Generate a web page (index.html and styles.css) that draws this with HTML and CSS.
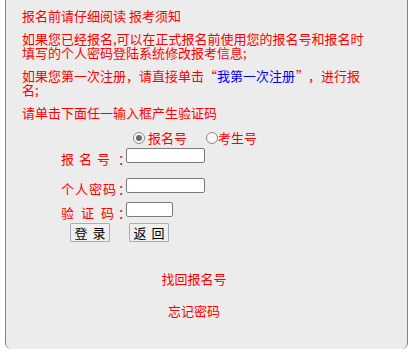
FILE: index.html
```html
<!DOCTYPE html>
<html lang="zh-CN">
<head>
<meta charset="utf-8">
<title>报名登录</title>
<link rel="stylesheet" href="styles.css">
</head>
<body>
<div class="panel">
  <div class="notice">
    <p>报名前请仔细阅读 <a class="red-link" href="#">报考须知</a></p>
    <p>如果您已经报名,可以在正式报名前使用您的报名号和报名时填写的个人密码登陆系统修改报考信息;</p>
    <p>如果您第一次注册，请直接单击<span class="q open">“</span><a class="blue-link" href="#">我第一次注册</a><span class="q close">”</span>，进行报<br>名;</p>
    <p>请单击下面任一输入框产生验证码</p>
  </div>
  <form class="login" onsubmit="return false">
    <div class="choice">
      <label class="opt"><input type="radio" name="kind" checked><span>报名号</span></label>
      <label class="opt"><input type="radio" name="kind"><span>考生号</span></label>
    </div>
    <div class="field row1">
      <span class="name sp5">报名<span class="ls0">号</span></span><span class="colon">：</span><input class="txt" type="text">
    </div>
    <div class="field row2">
      <span class="name sp1">个人密<span class="ls0">码</span></span><span class="colon">：</span><input class="txt" type="password">
    </div>
    <div class="field row3">
      <span class="name sp7">验证<span class="ls0">码</span></span><span class="colon">：</span><input class="txt short" type="text">
    </div>
    <div class="actions">
      <button type="submit" class="btn">登 录</button>
      <button type="button" class="btn">返 回</button>
    </div>
  </form>
  <div class="links">
    <a href="#" class="red-link">找回报名号</a>
    <a href="#" class="red-link">忘记密码</a>
  </div>
</div>
</body>
</html>
```

FILE: styles.css
```css
html, body {
  margin: 0;
  padding: 0;
  background: #ffffff;
}
body {
  font-family: "Noto Sans CJK SC", "Noto Sans", sans-serif;
  font-size: 13px;
  color: #ff0000;
}
.panel {
  box-sizing: border-box;
  margin-left: 5px;
  width: 403px;
  height: 349px;
  background: #ececec;
  border: 1px solid #7b8594;
  border-top: none;
  border-bottom: none;
  border-radius: 0 0 6px 6px;
  padding-top: 9px;
}
.notice {
  padding-left: 16px;
  width: 345px;
}
.notice p {
  margin: 0 0 9px 0;
  line-height: 14px;
}
.q {
  display: inline-block;
  width: 13px;
}
.q.open {
  text-align: center;
}
.q.close {
  text-align: left;
  text-indent: 1px;
}
a {
  text-decoration: none;
}
.red-link {
  color: #ff0000;
}
.blue-link {
  color: #0000ff;
}
.login {
  display: flex;
  flex-direction: column;
  margin: 0;
}
.choice {
  display: flex;
  align-items: center;
  margin: 2px 0 0 127px;
  height: 14px;
  line-height: 14px;
}
.opt {
  display: flex;
  align-items: center;
}
.opt + .opt {
  margin-left: 19px;
}
.opt input {
  appearance: none;
  -webkit-appearance: none;
  box-sizing: border-box;
  width: 12px;
  height: 12px;
  margin: 0 3px 0 0;
  border: 1px solid #8a8a8a;
  border-radius: 50%;
  background: #f7f7f7;
  display: grid;
  place-items: center;
}
.opt input:checked::before {
  content: "";
  width: 6px;
  height: 6px;
  border-radius: 50%;
  background: #6b6b6b;
}
.opt + .opt input {
  margin-right: 0;
}
.field {
  display: grid;
  grid-template-columns: 57px 8px auto;
  align-items: end;
  margin-left: 55px;
  height: 15px;
}
.row1 { margin-top: 3px; }
.row2 { margin-top: 15px; }
.row3 { margin-top: 9px; }
.name, .colon {
  white-space: nowrap;
  line-height: 13px;
  margin-bottom: -2px;
}
.sp1 { letter-spacing: 1px; }
.sp5 { letter-spacing: 5px; }
.sp7 { letter-spacing: 7px; }
.ls0 { letter-spacing: 0; }
.txt {
  box-sizing: border-box;
  width: 79px;
  height: 15px;
  margin: 0;
  padding: 0 2px;
  border: 1px solid #7a7a7a;
  border-radius: 2px;
  background: #ffffff;
  font-size: 12px;
  outline: none;
}
.txt.short {
  width: 47px;
}
.actions {
  display: flex;
  gap: 19px;
  margin: 6px 0 0 64px;
}
.btn {
  box-sizing: border-box;
  width: 40px;
  height: 19px;
  margin: 0;
  padding: 0;
  border: 1px solid #9fb0c6;
  border-radius: 1px;
  background: #efefef;
  color: #000000;
  font-family: "Noto Sans CJK SC", sans-serif;
  font-size: 13px;
  line-height: 17px;
  word-spacing: 2px;
}
.links {
  display: flex;
  flex-direction: column;
  align-items: center;
  gap: 19px;
  width: 376px;
  margin-top: 30px;
  line-height: 13px;
}
```
